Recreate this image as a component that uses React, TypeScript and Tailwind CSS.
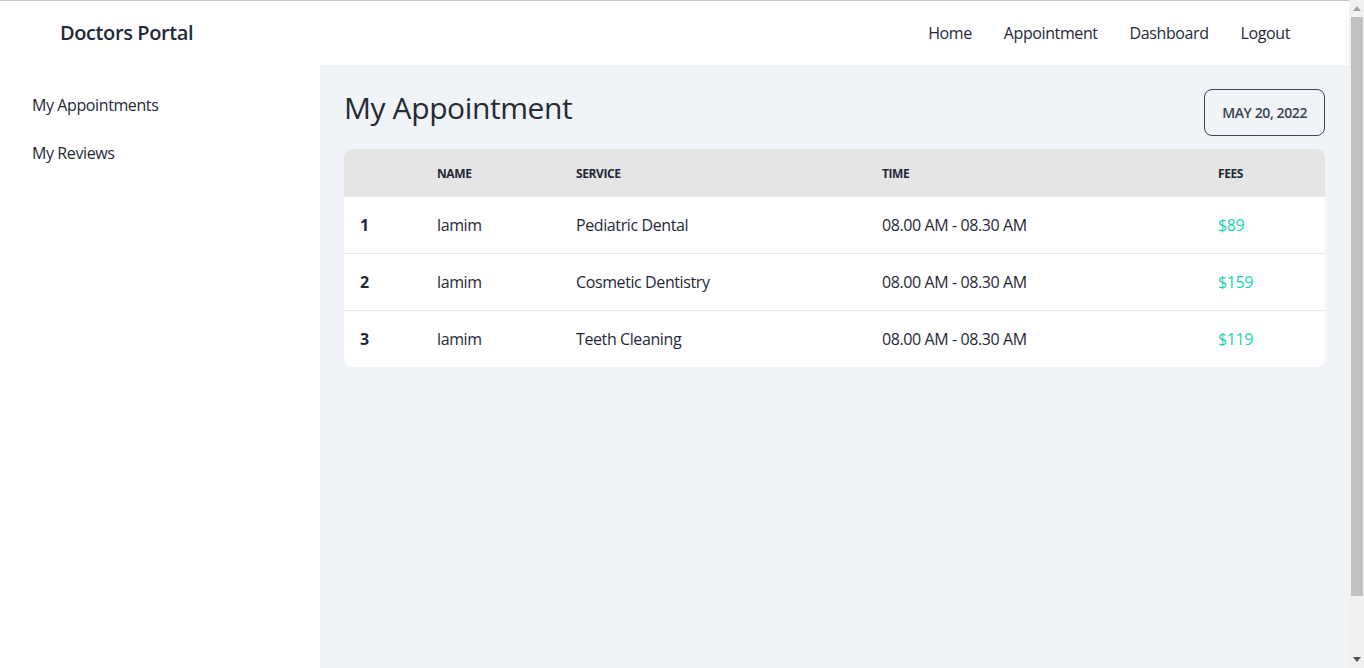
import React from 'react';

type Appointment = {
  id: number;
  name: string;
  service: string;
  time: string;
  fees: string;
};

const appointments: Appointment[] = [
  { id: 1, name: 'lamim', service: 'Pediatric Dental', time: '08.00 AM - 08.30 AM', fees: '$89' },
  { id: 2, name: 'lamim', service: 'Cosmetic Dentistry', time: '08.00 AM - 08.30 AM', fees: '$159' },
  { id: 3, name: 'lamim', service: 'Teeth Cleaning', time: '08.00 AM - 08.30 AM', fees: '$119' },
];

const rowClasses = ['h-14 border-b border-[#e6e6e6]', 'h-[57px] border-b border-[#e6e6e6]', 'h-[57px]'];

const navLinks = ['Home', 'Appointment', 'Dashboard', 'Logout'];

// the window's scrollbar, drawn so the page keeps the same width
const ScrollBar: React.FC = () => (
  <div className="w-[15px] shrink-0 h-screen bg-[#f1f1f1] flex flex-col items-center">
    <div className="h-[17px] flex items-center justify-center">
      <svg width="8" height="5" viewBox="0 0 8 5">
        <polygon points="4,0 8,5 0,5" fill="#a3a3a3" />
      </svg>
    </div>
    <div className="w-[12px] h-[579px] bg-[#c1c1c1]" />
    <div className="flex-1" />
    <div className="h-[17px] flex items-center justify-center">
      <svg width="8" height="5" viewBox="0 0 8 5">
        <polygon points="0,0 8,0 4,5" fill="#505050" />
      </svg>
    </div>
  </div>
);

const App: React.FC = () => {
  return (
    <div className="flex h-screen overflow-hidden">
      <div
        className="flex-1 min-w-0 border-t border-[#c6c6c6] bg-white text-[#1f2937] tracking-[-0.025em]"
        style={{ fontFamily: '"Open Sans", "Noto Sans", sans-serif' }}
      >
        {/* navbar */}
        <div className="h-16 flex items-center justify-between pl-[44px] pr-[43px]">
          <a className="px-4 text-xl font-semibold text-[#1f2937]">Doctors Portal</a>
          <ul className="flex items-center">
            {navLinks.map((link) => (
              <li key={link} className="px-4 py-3 text-base text-[#1f2937]">
                {link}
              </li>
            ))}
          </ul>
        </div>

        <div className="flex h-screen">
          {/* sidebar */}
          <ul className="w-80 shrink-0 p-4 bg-white">
            <li className="px-4 h-12 flex items-center text-base text-[#1f2937]">My Appointments</li>
            <li className="px-4 h-12 flex items-center text-base text-[#1f2937]">My Reviews</li>
          </ul>

          {/* content */}
          <div className="flex-1 bg-[#f0f3f8] px-6">
            <div className="flex items-start justify-between pt-6 pb-[13px]">
              <h2 className="text-3xl mt-px text-[#262b33]">My Appointment</h2>
              <button className="h-[47px] px-[17px] rounded-lg border border-[#3d4451] text-sm font-semibold text-[#3d4451] uppercase">
                May 20, 2022
              </button>
            </div>

            <div className="rounded-lg overflow-hidden bg-white">
              <table className="w-full table-fixed text-left">
                <colgroup>
                  <col className="w-[77px]" />
                  <col className="w-[139px]" />
                  <col className="w-[306px]" />
                  <col className="w-[336px]" />
                  <col />
                </colgroup>
                <thead>
                  <tr className="bg-[#e5e5e5] h-12">
                    <th className="px-4 pt-px"></th>
                    <th className="px-4 pt-px text-xs font-bold uppercase text-[#1f2937]">Name</th>
                    <th className="px-4 pt-px text-xs font-bold uppercase text-[#1f2937]">Service</th>
                    <th className="px-4 pt-px text-xs font-bold uppercase text-[#1f2937]">Time</th>
                    <th className="px-4 pt-px text-xs font-bold uppercase text-[#1f2937]">Fees</th>
                  </tr>
                </thead>
                <tbody>
                  {appointments.map((a, i) => (
                    <tr key={a.id} className={rowClasses[i]}>
                      <th className="px-4 font-bold text-base">{a.id}</th>
                      <td className="px-4 text-base">{a.name}</td>
                      <td className="px-4 text-base">{a.service}</td>
                      <td className="px-4 text-base">{a.time}</td>
                      <td className="px-4 text-base text-[#19d3ae]">{a.fees}</td>
                    </tr>
                  ))}
                </tbody>
              </table>
            </div>
          </div>
        </div>
      </div>
      <ScrollBar />
    </div>
  );
};

export default App;
